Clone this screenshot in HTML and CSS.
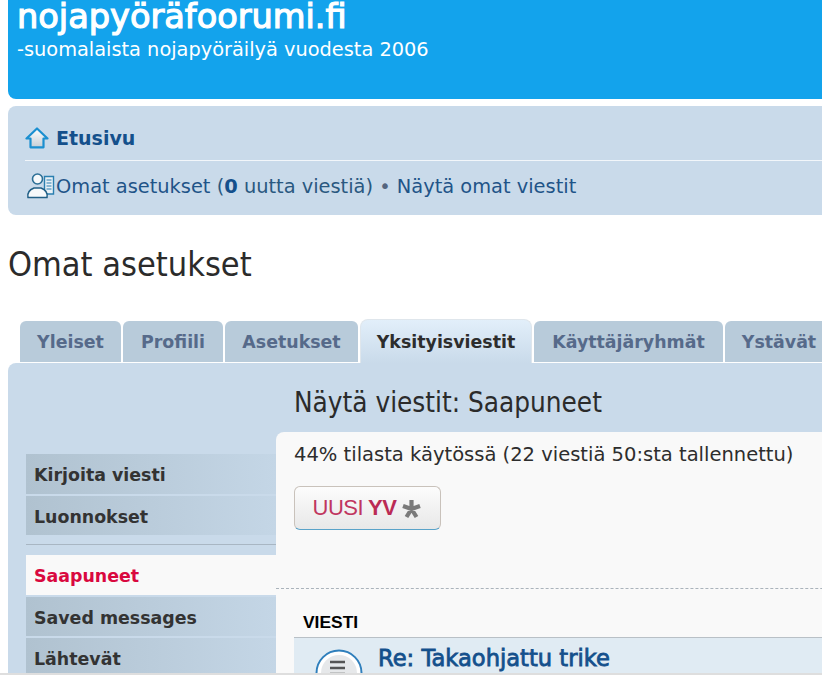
FILE: index.html
```html
<!DOCTYPE html>
<html lang="fi">
<head>
<meta charset="utf-8">
<title>Omat asetukset</title>
<link rel="stylesheet" href="styles.css">
</head>
<body>
<div class="page">
  <header class="banner">
    <div class="site-title">nojapyöräfoorumi.fi</div>
    <div class="site-sub">-suomalaista nojapyöräilyä vuodesta 2006</div>
  </header>
  <nav class="navbar">
    <div class="nav-row nav-home">
      <svg class="ico-home" width="24" height="22" viewBox="0 0 24 22">
        <defs><linearGradient id="homeFill" x1="0" y1="0" x2="0" y2="1"><stop offset="0" stop-color="#ffffff"/><stop offset="1" stop-color="#c5ced6"/></linearGradient></defs>
        <path d="M12 1.500 1.500 11.500H5.500v8.800h13v-8.800h4z" fill="url(#homeFill)" stroke="#1b8fd0" stroke-width="2.200" stroke-linejoin="round"/>
      </svg>
      <a class="home-link">Etusivu</a>
    </div>
    <div class="nav-row nav-user">
      <svg class="ico-user" width="31" height="26" viewBox="0 0 31 26">
        <path d="M19.500 3.500H28.500V21H19.500z" fill="#e8f0f6" stroke="#2a7fb0" stroke-width="1.400"/>
        <path d="M21.500 7h5M21.500 10h5M21.500 13h5M21.500 16h5" stroke="#2a7fb0"/>
        <circle cx="12.500" cy="6" r="5" fill="#f6f9fb" stroke="#2c6f96" stroke-width="1.600"/>
        <path d="M3 24.500c-1-5 2-8 6-9.500h7c4 1.500 7 4.500 6 9.500z" fill="#f6f9fb" stroke="#215f86" stroke-width="1.600" stroke-linejoin="round"/>
      </svg>
      <span class="user-links"><a>Omat asetukset</a> (<b>0</b> uutta viestiä) <span class="sep">•</span> <a>Näytä omat viestit</a></span>
    </div>
  </nav>
  <h1 class="page-title">Omat asetukset</h1>
  <ul class="tabs">
    <li class="tab t1">Yleiset</li>
    <li class="tab t2">Profiili</li>
    <li class="tab t3">Asetukset</li>
    <li class="tab active">Yksityisviestit</li>
    <li class="tab t5">Käyttäjäryhmät</li>
    <li class="tab t6">Ystävät</li>
  </ul>
  <section class="panel">
    <aside class="side">
      <a class="side-item">Kirjoita viesti</a>
      <a class="side-item short">Luonnokset</a>
      <hr class="side-rule">
      <a class="side-item current">Saapuneet</a>
      <a class="side-item short">Saved messages</a>
      <a class="side-item">Lähtevät</a>
    </aside>
    <div class="main">
      <h2 class="main-title">Näytä viestit: Saapuneet</h2>
      <div class="box">
        <p class="quota">44% tilasta käytössä (22 viestiä 50:sta tallennettu)</p>
        <button class="new-btn" type="button"><span class="b1">UUSI</span> <span class="b2">YV</span><svg class="b3" width="21" height="22" viewBox="0 0 21 22"><path d="M10.500 11V2M10.500 11 19 8M10.500 11 2 8M10.500 11 15.500 19M10.500 11 5.500 19" stroke="#7a7a7a" stroke-width="4.200"/></svg></button>
        <div class="dash"></div>
        <div class="list-head">VIESTI</div>
        <div class="msg">
          <svg class="msg-ico" width="48" height="48" viewBox="0 0 48 48"><circle cx="24" cy="24" r="22.500" fill="#ffffff" stroke="#2f7fbc" stroke-width="2"/><circle cx="24" cy="24" r="18" fill="#e6e8ea"/><path d="M15 13h15M15 19h15M15 25h15" stroke="#555" stroke-width="2.500"/></svg>
          <a class="msg-title">Re: Takaohjattu trike</a>
        </div>
      </div>
    </div>
  </section>
</div>
<div class="window-edge"></div>
</body>
</html>
```
FILE: styles.css
```css
html, body { margin: 0; padding: 0; height: 675px; overflow: hidden; background: #fff; }
body { font-family: "DejaVu Sans", sans-serif; color: #2d2d2d; }
a { color: inherit; text-decoration: none; }
.page { width: 1000px; padding-left: 8px; }
.window-edge { position: fixed; left: 0; right: 0; bottom: 0; height: 2px; background: #dedede; }

.banner { height: 99px; background: #13a3ec; border-radius: 0 0 0 8px; color: #fff; padding-left: 9px; box-sizing: border-box; }
.site-title { font-size: 33.600px; font-weight: normal; -webkit-text-stroke: 1.200px #fff; line-height: 34px; }
.site-sub { font-size: 19.350px; line-height: 24px; margin-top: 4px; }

.navbar { margin-top: 7px; height: 109px; background: #c9daea; border-radius: 8px 0 0 8px; padding: 0 0 0 17px; box-sizing: border-box; color: #1a5389; }
.nav-row { display: flex; align-items: center; }
.nav-home { border-bottom: 1px solid #f2f6fa; padding-top: 9px; height: 45px; }
.nav-user { height: 50px; }
.ico-home { margin-right: 7px; }
.home-link { font-weight: bold; font-size: 19px; color: #14508c; }
.user-links { font-size: 19.400px; color: #2a5880; }
.user-links a { color: #1f5488; }
.user-links b { color: #14508c; }
.sep { color: #54657f; }

.page-title { margin: 27px 0 0; font-family: "DejaVu Sans Condensed", "DejaVu Sans", sans-serif; font-size: 34px; font-weight: normal; line-height: 44px; color: #2b2b2b; }

.tabs { list-style: none; margin: 33px 0 0; padding: 0 0 0 12px; display: flex; gap: 2px; height: 43px; align-items: flex-end; }
.tab { height: 41px; box-sizing: border-box; background: #b8cbda; border-radius: 6px 6px 0 0; font-weight: bold; font-size: 17.400px; color: #566a8a; display: flex; align-items: center; justify-content: center; }
.t1 { width: 101px; } .t2 { width: 100px; } .t3 { width: 133px; } .t5 { width: 189px; } .t6 { width: 108px; }
.tab.active { width: 172px; height: 44px; margin-bottom: -1px; background: linear-gradient(#e2effa, #c9daea); color: #2d2d2d; border: 1px solid #dfe6ec; border-bottom: 0; border-radius: 8px 8px 0 0; }

.panel { display: flex; background: #c9daea; border-radius: 8px 0 0 0; height: 400px; padding-left: 18px; margin-top: 1px; }
.side { width: 250px; padding-top: 91px; flex: none; display: flex; flex-direction: column; }
.side-item { height: 40px; margin-bottom: 2px; padding: 2px 0 0 8px; box-sizing: border-box; display: flex; align-items: center; background: linear-gradient(90deg, #b0c2d0, #c4d6e6); font-weight: bold; font-size: 17.400px; color: #333; flex: none; }
.side-item.short { height: 39px; }
.side-item.current { background: #f9f9f9; color: #d9083f; }
.side-rule { width: 100%; border: 0; border-top: 1px solid #a8b6c3; margin: 7px 0 10px; flex: none; }

.main { flex: 1; }
.main-title { margin: 0; height: 69px; padding: 18px 0 0 18px; box-sizing: border-box; font-family: "DejaVu Sans Condensed", "DejaVu Sans", sans-serif; font-weight: normal; font-size: 27.650px; line-height: 44px; color: #2b2b2b; }
.box { background: #f9f9f9; border-radius: 8px 0 0 0; padding: 11px 0 0 18px; height: 331px; box-sizing: border-box; }
.quota { margin: 0; font-size: 19.520px; line-height: 24px; color: #2d2d2d; }
.new-btn { display: flex; align-items: center; justify-content: center; margin-top: 19px; width: 147px; height: 44px; padding: 0; gap: 5px; border: 1px solid #c9c2bb; border-bottom-color: #5aa3c9; border-radius: 6px; background: linear-gradient(#fcfcfc, #e8e8e8); font-family: "Liberation Sans", sans-serif; font-size: 22px; letter-spacing: -0.5px; }
.b1 { color: #c0365f; }
.b2 { color: #bb2b55; font-weight: bold; }
.b3 { flex: none; margin-top: 2px; }
.dash { margin: 58px 0 0 -18px; border-top: 1px dashed #aab3bb; }
.list-head { height: 49px; line-height: 18px; padding: 24px 0 0 9px; box-sizing: border-box; border-bottom: 1px solid #b9c0c6; font-family: "Liberation Sans", sans-serif; font-weight: bold; font-size: 17.400px; color: #000; }
.msg { background: #e0ebf3; height: 60px; padding-left: 21px; display: flex; align-items: flex-start; gap: 15px; }
.msg-ico { margin-top: 11px; flex: none; }
.msg-title { font-size: 22.600px; -webkit-text-stroke: 0.8px #14508c; line-height: 40px; color: #14508c; }
```
